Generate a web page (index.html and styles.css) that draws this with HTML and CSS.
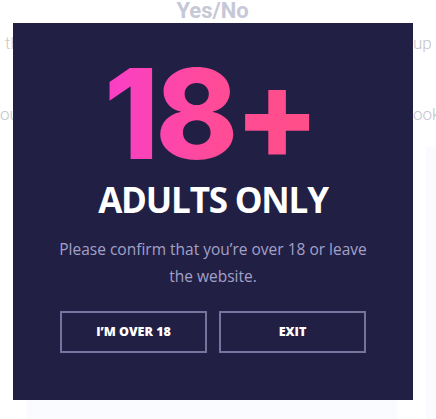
FILE: index.html
```html
<!DOCTYPE html>
<html>
<head>
<meta charset="utf-8">
<link rel="stylesheet" href="styles.css">
</head>
<body>
<div class="page">
  <h2 class="page-title">Yes/No</h2>
  <div class="page-line line-a"><span class="left warm">the age verification popup</span><span class="right">up page</span></div>
  <div class="page-line line-b"><span class="left">ou can choose a different look</span><span class="right">ook</span></div>
  <div class="cards">
    <div class="card card-main"></div>
    <div class="card card-side"></div>
  </div>
</div>

<div class="modal">
  <div class="age">18+</div>
  <h1 class="heading">ADULTS ONLY</h1>
  <p class="message">Please confirm that you’re over 18 or leave the website.</p>
  <div class="actions">
    <button class="btn">I’M OVER 18</button>
    <button class="btn">EXIT</button>
  </div>
</div>
</body>
</html>
```
FILE: styles.css
```css
* { box-sizing: border-box; }
html, body { margin: 0; padding: 0; }
body {
  width: 436px;
  height: 419px;
  overflow: hidden;
  background: #ffffff;
  font-family: "Open Sans", "Noto Sans", sans-serif;
  position: relative;
}
.page {
  display: flex;
  flex-direction: column;
  height: 419px;
}
.page-title {
  margin: 0;
  height: 24px;
  text-align: center;
  font-family: Roboto, "Liberation Sans", sans-serif;
  font-weight: 700;
  font-size: 22px;
  line-height: 22px;
  color: #c6c8d6;
  padding-right: 11px;
}
.page-line {
  display: flex;
  white-space: nowrap;
  overflow: hidden;
  font-family: Roboto, "Liberation Sans", sans-serif;
  font-weight: 300;
  font-size: 17px;
  line-height: 20px;
  color: #c5c4cd;
}
.page-line .warm { color: #d7c6c1; }
.page-line .left { overflow: hidden; flex: none; }
.page-line .right { flex: none; }
.line-a { margin-top: 9px; padding-left: 5px; }
.line-a .left { width: 408px; }
.line-b { margin-top: 51px; padding-left: 0; }
.line-b .left { width: 413px; }
.cards {
  flex: 1;
  position: relative;
}
.card {
  background: #fafbff;
  position: absolute;
}
.card-main { left: 27px; width: 370px; bottom: 0; height: 19px; }
.card-side { left: 426px; right: 0; top: 147px; bottom: 0; position: fixed; }

.modal {
  position: absolute;
  left: 13px;
  top: 23px;
  width: 400px;
  height: 377px;
  background: #221f44;
  display: flex;
  flex-direction: column;
  align-items: center;
  padding-top: 28px;
}
.age {
  font-family: Inter, "Noto Sans", sans-serif;
  font-weight: 800;
  font-size: 125px;
  line-height: 1;
  letter-spacing: -4px;
  background: linear-gradient(90deg, #fa3ec8 0%, #ff4b98 50%, #ff4f86 100%);
  -webkit-background-clip: text;
  background-clip: text;
  color: transparent;
  padding-right: 6px;
}
.heading {
  margin: 4px 0 0;
  font-family: "Open Sans", "Noto Sans", sans-serif;
  font-weight: 700;
  font-size: 35px;
  line-height: 40px;
  letter-spacing: -1.2px;
  color: #ffffff;
}
.message {
  margin: 16px 0 0;
  width: 310px;
  text-align: center;
  font-family: "Open Sans", "Noto Sans", sans-serif;
  font-weight: 400;
  font-size: 15.5px;
  line-height: 27px;
  color: #a3a1c8;
}
.actions {
  margin-top: 21px;
  display: flex;
  gap: 12px;
}
.btn {
  width: 147px;
  height: 42px;
  border: 2px solid #76749f;
  background: transparent;
  color: #ffffff;
  font-family: "Open Sans", "Noto Sans", sans-serif;
  font-weight: 800;
  font-size: 12.5px;
  padding: 0 0 2px;
}
```
